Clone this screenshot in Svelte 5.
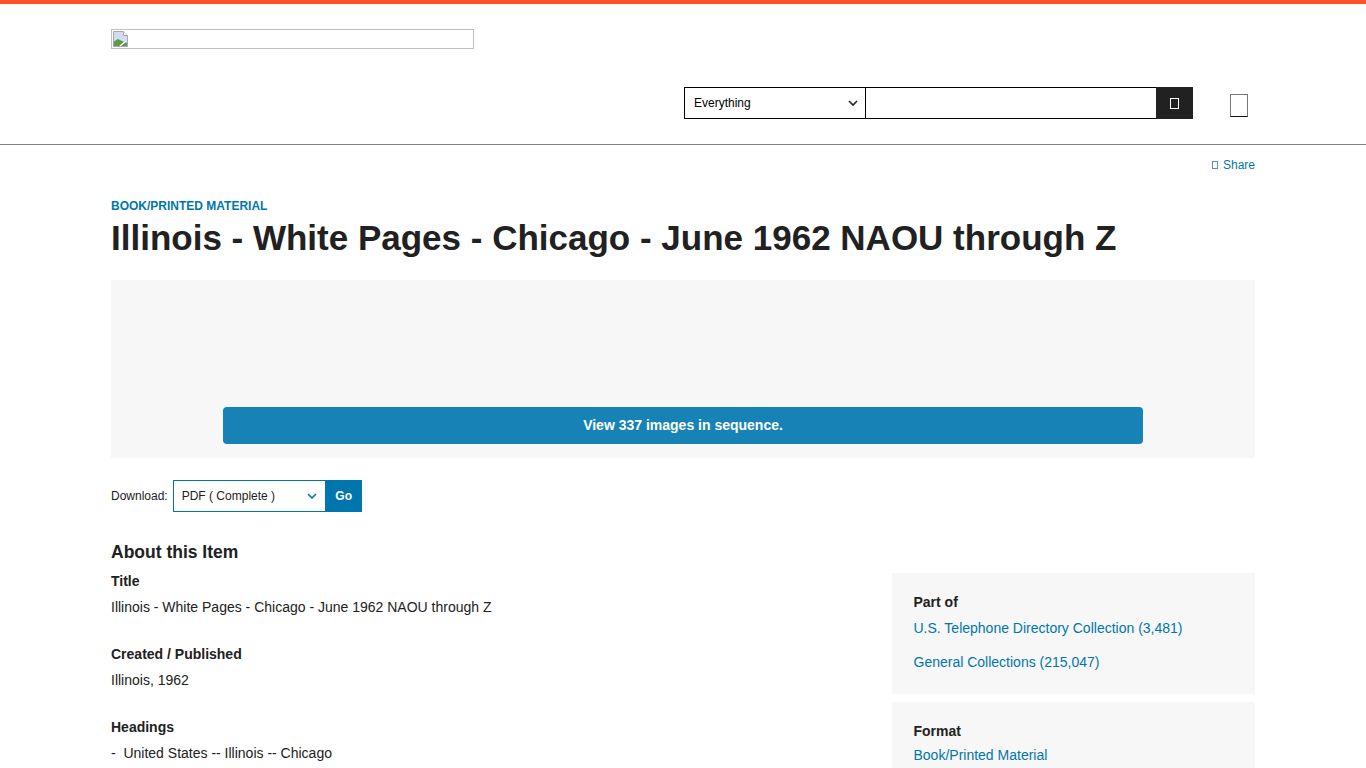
<script>
  const meta = [
    { label: "Title", text: "Illinois - White Pages - Chicago - June 1962 NAOU through Z" },
    { label: "Created / Published", text: "Illinois, 1962" },
    { label: "Headings", text: "-  United States -- Illinois -- Chicago" }
  ];
</script>

<div class="accent"></div>

<header class="header">
  <div class="wrap">
    <div class="logo">
      <svg class="broken" width="16" height="16" viewBox="0 0 16 16">
        <path d="M0.5 0.5h10l4 4v11H0.5z" fill="#cfdcf3" stroke="#a8a8a8" />
        <path d="M10.5 0.5v4h4" fill="#fff" stroke="#a8a8a8" />
        <path d="M1 15V10.5l4-2.5 3 1.5 6 2.5V15z" fill="#5a9a48" />
        <path d="M7 15l6-5" stroke="#fff" stroke-width="1.5" />
      </svg>
    </div>
    <div class="tools">
      <form class="search">
        <div class="scope">
          <span>Everything</span>
          <svg width="10" height="6" viewBox="0 0 10 6"><path d="M1 1l4 4 4-4" fill="none" stroke="#212121" stroke-width="1.6" /></svg>
        </div>
        <div class="field"></div>
        <button class="submit" type="button"><span class="tofu"></span></button>
      </form>
      <div class="menu"></div>
    </div>
  </div>
</header>

<main class="wrap">
  <div class="share-row">
    <a class="share" href="#share"><span class="tofu small"></span> Share</a>
  </div>

  <div class="kind">BOOK/PRINTED MATERIAL</div>
  <h1>Illinois - White Pages - Chicago - June 1962 NAOU through Z</h1>

  <section class="viewer">
    <a class="view-btn" href="#view">View 337 images in sequence.</a>
  </section>

  <div class="download">
    <span class="dl-label">Download:</span>
    <div class="dl-select">
      <span>PDF ( Complete )</span>
      <svg width="10" height="6" viewBox="0 0 10 6"><path d="M1 1l4 4 4-4" fill="none" stroke="#0076ad" stroke-width="1.6" /></svg>
    </div>
    <button class="go" type="button">Go</button>
  </div>

  <h2>About this Item</h2>

  <div class="about">
    <div class="details">
      {#each meta as m}
        <div class="item">
          <h3>{m.label}</h3>
          <p>{m.text}</p>
        </div>
      {/each}
    </div>
    <aside class="side">
      <div class="box">
        <h3>Part of</h3>
        <a href="#a">U.S. Telephone Directory Collection (3,481)</a>
        <a href="#b">General Collections (215,047)</a>
      </div>
      <div class="box format">
        <h3>Format</h3>
        <a href="#c">Book/Printed Material</a>
      </div>
    </aside>
  </div>
</main>

<style>
  :global(body) {
    background: #fff;
    color: #212121;
    font-family: "Liberation Sans", Arial, sans-serif;
    height: 768px;
    overflow: hidden;
  }

  .accent {
    height: 4px;
    background: #ff5029;
  }

  .header {
    height: 141px;
    box-sizing: border-box;
    border-bottom: 1px solid #808080;
  }

  .wrap {
    width: 1144px;
    margin: 0 auto;
  }

  .logo {
    margin-top: 25px;
    display: inline-block;
    vertical-align: top;
    width: 363px;
    height: 20px;
    box-sizing: border-box;
    border: 1px solid #c0c0c0;
    padding: 1px 0 0 1px;
    line-height: 0;
  }

  .tools {
    display: flex;
    justify-content: flex-end;
    align-items: center;
    margin-top: 38px;
  }

  .search {
    display: flex;
    height: 32px;
    margin: 0;
    margin-right: 37px;
  }

  .scope {
    width: 182px;
    box-sizing: border-box;
    border: 1px solid #000;
    display: flex;
    align-items: center;
    justify-content: space-between;
    padding: 0 7px 0 9px;
    font-size: 12px;
    color: #000;
  }

  .field {
    width: 290px;
    box-sizing: border-box;
    border: 1px solid #000;
    border-left: 0;
    border-right: 0;
  }

  .submit {
    width: 37px;
    border: 0;
    padding: 0;
    background: #212121;
    display: flex;
    align-items: center;
    justify-content: center;
  }

  .tofu {
    display: block;
    width: 9px;
    height: 11px;
    box-sizing: border-box;
    border: 1px solid #fff;
  }

  .tofu.small {
    display: inline-block;
    width: 6px;
    height: 8px;
    border-color: #5a93b0;
    margin-right: 2px;
  }

  .menu {
    width: 18px;
    height: 23px;
    box-sizing: border-box;
    border: 1px solid #777;
    border-bottom-color: #111;
    margin-right: 7px;
    margin-top: 5px;
  }

  .share-row {
    display: flex;
    justify-content: flex-end;
    margin-top: 13px;
    height: 14px;
  }

  .share {
    color: #0076ad;
    font-size: 12px;
    line-height: 14px;
    text-decoration: none;
  }

  .kind {
    margin-top: 27px;
    font-size: 12px;
    font-weight: 700;
    line-height: 14px;
    color: #0076ad;
  }

  h1 {
    margin: 3px 0 0;
    font-size: 35px;
    line-height: 44px;
    font-weight: 700;
    color: #212121;
  }

  .viewer {
    margin-top: 20px;
    height: 178px;
    background: #f7f7f7;
    display: flex;
    flex-direction: column;
    justify-content: flex-end;
    align-items: center;
    padding-bottom: 14px;
    box-sizing: border-box;
  }

  .view-btn {
    width: 920px;
    height: 37px;
    line-height: 37px;
    background: #1782b6;
    border-radius: 4px;
    color: #fff;
    font-size: 14px;
    font-weight: 700;
    text-align: center;
    text-decoration: none;
  }

  .download {
    display: flex;
    align-items: center;
    margin-top: 22px;
    height: 32px;
  }

  .dl-label {
    font-size: 12px;
    margin-right: 5px;
  }

  .dl-select {
    width: 153px;
    height: 32px;
    box-sizing: border-box;
    border: 1px solid #0076ad;
    display: flex;
    align-items: center;
    justify-content: space-between;
    padding: 0 8px;
    font-size: 12px;
  }

  .go {
    width: 36px;
    height: 32px;
    border: 0;
    padding: 0;
    background: #0076ad;
    color: #fff;
    font-family: inherit;
    font-size: 12px;
    font-weight: 700;
  }

  h2 {
    margin: 29px 0 0;
    font-size: 17.5px;
    line-height: 22px;
    font-weight: 700;
  }

  .about {
    display: flex;
    justify-content: space-between;
    margin-top: 3px;
  }

  .details {
    padding-top: 6px;
  }

  .item {
    height: 73px;
  }

  h3 {
    margin: 0;
    font-size: 14px;
    line-height: 18px;
    font-weight: 700;
  }

  .item p {
    margin: 8px 0 0;
    font-size: 14px;
    line-height: 18px;
    white-space: pre;
  }

  .side {
    width: 363px;
    margin-top: 7px;
    display: flex;
    flex-direction: column;
    gap: 8px;
  }

  .box {
    background: #f7f7f7;
    padding: 20px 21.5px 23px;
  }

  .box a {
    display: block;
    color: #0076ad;
    font-size: 14px;
    line-height: 18px;
    text-decoration: none;
    margin-top: 8px;
    margin-bottom: 16px;
  }

  .box a:last-child {
    margin-bottom: 0;
  }

  .format a {
    margin-top: 6px;
  }
</style>
